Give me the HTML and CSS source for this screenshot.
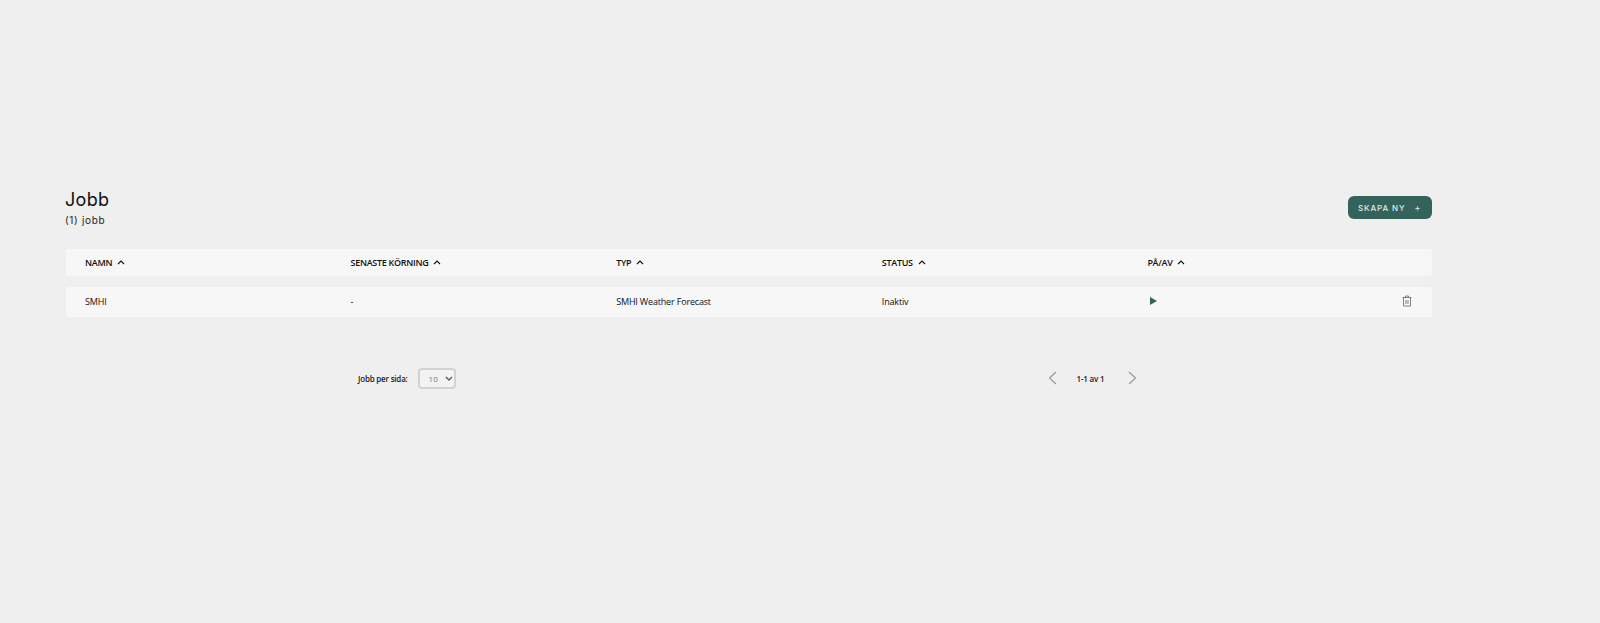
FILE: index.html
```html
<!DOCTYPE html>
<html lang="sv">
<head>
<meta charset="utf-8">
<title>Jobb</title>
<link rel="stylesheet" href="styles.css">
</head>
<body>
<main class="page">
  <header class="head">
    <div>
      <h1 class="title">Jobb</h1>
      <p class="count">(1) jobb</p>
    </div>
    <button class="create" type="button"><span>SKAPA NY</span><span class="plus">+</span></button>
  </header>
  <div class="row row-head">
    <div class="cell">NAMN <svg class="caret" viewBox="0 0 8 5"><path d="M1 4l3-3 3 3"/></svg></div>
    <div class="cell">SENASTE KÖRNING <svg class="caret" viewBox="0 0 8 5"><path d="M1 4l3-3 3 3"/></svg></div>
    <div class="cell">TYP <svg class="caret" viewBox="0 0 8 5"><path d="M1 4l3-3 3 3"/></svg></div>
    <div class="cell">STATUS <svg class="caret" viewBox="0 0 8 5"><path d="M1 4l3-3 3 3"/></svg></div>
    <div class="cell">PÅ/AV <svg class="caret" viewBox="0 0 8 5"><path d="M1 4l3-3 3 3"/></svg></div>
  </div>
  <div class="row row-body">
    <div class="cell">SMHI</div>
    <div class="cell">-</div>
    <div class="cell">SMHI Weather Forecast</div>
    <div class="cell">Inaktiv</div>
    <div class="cell cell-actions">
      <svg class="play" viewBox="0 0 7 8"><path d="M0 0l7 4-7 4z"/></svg>
      <svg class="trash" viewBox="0 0 10 12"><path d="M.5 2.500h9M3.500 2.500V1h3v1.500M1.500 2.500v8.500h7V2.500M4 5v4M6 5v4"/></svg>
    </div>
  </div>
  <div class="pager">
    <div class="per-page">
      <label class="pager-label" for="size">Jobb per sida:</label>
      <div class="size-wrap">
        <select class="size" id="size"><option>10</option></select>
        <svg class="size-arrow" viewBox="0 0 8 5"><path d="M1 1l3 3 3-3"/></svg>
      </div>
    </div>
    <div class="nav">
      <svg class="arrow" viewBox="0 0 9 14"><path d="M8 1L1.500 7 8 13"/></svg>
      <span class="pager-label range">1-1 av 1</span>
      <svg class="arrow" viewBox="0 0 9 14"><path d="M1 1l6.500 6L1 13"/></svg>
    </div>
  </div>
</main>
</body>
</html>
```
FILE: styles.css
```css
* { box-sizing: border-box; }
html, body { margin: 0; height: 100%; }
body { background: #efefef; color: #111; font-family: "Open Sans", sans-serif; overflow: hidden; }
.page { width: 1366px; margin-left: 66px; padding-top: 189px; }
.head { display: flex; justify-content: space-between; align-items: flex-start; height: 60px; }
.title { margin: 0 0 0 -1px; font: 400 18px/22px Inter, sans-serif; letter-spacing: .3px; color: #111; }
.count { margin: 2px 0 0 -1px; font: 400 10px/14px Inter, sans-serif; letter-spacing: .7px; color: #222; }
.create { display: flex; align-items: center; gap: 9px; width: 84px; height: 23px; margin-top: 7px; padding: 0 0 0 10px; border: 0; border-radius: 6px; background: #34635b; color: #e3ebe9; font: 500 8px/1 Inter, sans-serif; letter-spacing: .9px; }
.plus { font-size: 9px; font-weight: 400; }
.row { display: grid; grid-template-columns: repeat(5, 1fr); padding: 0 19px; background: #f7f7f7; border-radius: 3px; align-items: center; font-size: 9px; }
.row-head { height: 27px; font-weight: 600; margin-bottom: 11px; letter-spacing: -.3px; }
.row-body { height: 30px; letter-spacing: -.17px; }
.cell { white-space: nowrap; margin-top: -1px; }
.row-head .cell { margin-top: 0; }
.caret { width: 8px; height: 5px; margin: 0 0 1px 3px; fill: none; stroke: #111; stroke-width: 1.100; }
.cell-actions { display: flex; justify-content: space-between; align-items: center; }
.row-body .cell-actions { margin-top: -2px; }
.play { width: 7px; height: 8px; margin-left: 3px; fill: #34635b; }
.trash { width: 10px; height: 12px; margin-right: 1px; fill: none; stroke: #666; stroke-width: .8; }
.pager { display: flex; margin-top: 50px; height: 22px; align-items: center; }
.per-page { display: flex; align-items: center; gap: 10px; margin-left: 292px; }
.pager-label { font-size: 8px; font-weight: 600; letter-spacing: -.2px; color: #222; }
.size-wrap { position: relative; display: flex; }
.size { appearance: none; width: 38px; height: 21px; padding: 0 0 0 9px; border: 2px solid #d2d2d2; border-radius: 4px; background: #f3f3f3; color: #777; font: 400 8px "Open Sans", sans-serif; }
.size-arrow { position: absolute; top: 8px; right: 3px; width: 8px; height: 5px; fill: none; stroke: #555; stroke-width: 1.300; pointer-events: none; }
.nav { display: flex; align-items: center; gap: 20px; margin-left: 592px; }
.range { margin-right: 4px; }
.arrow { width: 9px; height: 14px; fill: none; stroke: #999; stroke-width: 1.200; }
```
